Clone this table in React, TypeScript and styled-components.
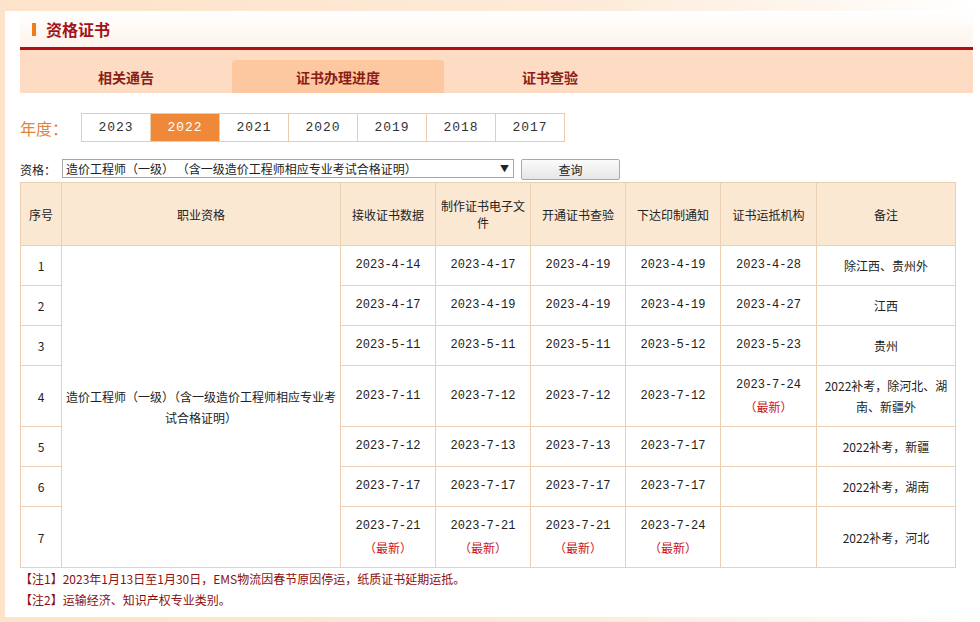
import React from "react";
import styled, { createGlobalStyle } from "styled-components";

const Global = createGlobalStyle`
  html, body { margin: 0; padding: 0; }
  body {
    width: 980px;
    height: 622px;
    overflow: hidden;
    background: #fdebd9;
    font-family: "Noto Sans CJK SC", "Noto Sans", sans-serif;
  }
`;

const Outer = styled.div`
  width: 980px;
  height: 622px;
  background: linear-gradient(to right, #fde3c9 0%, #fdebd9 60%, #ffffff 100%);
  padding: 11px 0 5px 5px;
  box-sizing: border-box;
`;

const Panel = styled.div`
  background: #fff;
  height: 606px;
  padding: 0 7px 0 15px;
  box-sizing: border-box;
  display: flex;
  flex-direction: column;
`;

const TitleBar = styled.div`
  height: 36px;
  background: linear-gradient(#ffffff, #fdf3ec);
  border-bottom: 3px solid #b10f0f;
  display: flex;
  align-items: center;
  padding-left: 12px;
  gap: 10px;
`;

const TitleMark = styled.span`
  width: 4px;
  height: 13px;
  background: #ef7d12;
`;

const Title = styled.span`
  font-size: 16px;
  font-weight: 700;
  color: #a3141a;
`;

const TabBar = styled.div`
  height: 43px;
  background: #fddcc3;
  display: flex;
  align-items: flex-end;
`;

const Tab = styled.div<{ $active?: boolean }>`
  width: 212px;
  height: 33px;
  display: flex;
  align-items: center;
  justify-content: center;
  font-size: 14px;
  font-weight: 700;
  color: #8a1e16;
  background: ${(p) => (p.$active ? "#fdc8a0" : "transparent")};
  border-radius: 4px 4px 0 0;
`;

const YearRow = styled.div`
  display: flex;
  align-items: center;
  margin-top: 20px;
  height: 29px;
`;

const YearLabel = styled.span`
  width: 61px;
  font-size: 16px;
  color: #e2843c;
`;

const YearBtn = styled.div<{ $active?: boolean }>`
  width: 68px;
  height: 27px;
  border: 1px solid #ebcbad;
  margin-left: -1px;
  &:first-of-type { margin-left: 0; }
  display: flex;
  align-items: center;
  justify-content: center;
  font-family: "Liberation Mono", monospace;
  font-size: 13px;
  letter-spacing: 1px;
  color: ${(p) => (p.$active ? "#fff" : "#333")};
  background: ${(p) => (p.$active ? "#f0883a" : "#fff")};
`;

const QueryRow = styled.div`
  display: flex;
  align-items: center;
  margin-top: 17px;
  height: 21px;
`;

const QueryLabel = styled.span`
  width: 42px;
  font-size: 12px;
  color: #222;
`;

const SelectBox = styled.div`
  width: 443px;
  height: 17px;
  border: 1px solid #a5a5a5;
  display: flex;
  align-items: center;
  justify-content: space-between;
  padding: 0 4px 0 3px;
  box-sizing: content-box;
  margin-top: -3px;
  font-size: 12px;
  color: #222;
  background: #fff;
`;

const Arrow = styled.span`
  font-size: 9px;
  color: #222;
`;

const QueryBtn = styled.div`
  width: 97px;
  height: 19px;
  margin-left: 7px;
  border: 1px solid #a9a9a9;
  border-radius: 2px;
  background: linear-gradient(#fbfbfb, #e6e6e6);
  display: flex;
  align-items: center;
  justify-content: center;
  font-size: 12px;
  color: #222;
`;

const Table = styled.table`
  margin-top: 2px;
  width: 935px;
  border-collapse: collapse;
  table-layout: fixed;
  font-size: 12px;
  color: #222;
`;

const Th = styled.th`
  height: 62px;
  background: #fbe8d3;
  border: 1px solid #ebd0b4;
  font-weight: 400;
  font-size: 12px;
  line-height: 17px;
  color: #222;
  padding: 0 4px;
`;

const Td = styled.td<{ $tall?: boolean }>`
  height: ${(p) => (p.$tall ? 60 : 39)}px;
  border: 1px solid #ebd0b4;
  text-align: center;
  padding: 0 2px;
  line-height: 21px;
`;

const DateText = styled.span`
  font-family: "Liberation Mono", monospace;
  font-size: 12px;
  display: block;
`;

const Latest = styled.span`
  display: block;
  color: #c8141a;
  font-size: 12px;
`;

const NameCell = styled.td`
  border: 1px solid #ebd0b4;
  text-align: center;
  padding: 0;
  line-height: 21px;
  font-size: 12px;
`;

const Notes = styled.div`
  padding-top: 0px;
  font-size: 12px;
  line-height: 21px;
  color: #8b0f0f;
`;

const years = ["2023", "2022", "2021", "2020", "2019", "2018", "2017"];

type Row = {
  no: string;
  d: (string | null)[];
  latest: boolean[];
  note: React.ReactNode;
  tall?: boolean;
};

const rows: Row[] = [
  { no: "1", d: ["2023-4-14", "2023-4-17", "2023-4-19", "2023-4-19", "2023-4-28"], latest: [], note: "除江西、贵州外" },
  { no: "2", d: ["2023-4-17", "2023-4-19", "2023-4-19", "2023-4-19", "2023-4-27"], latest: [], note: "江西" },
  { no: "3", d: ["2023-5-11", "2023-5-11", "2023-5-11", "2023-5-12", "2023-5-23"], latest: [], note: "贵州" },
  {
    no: "4",
    d: ["2023-7-11", "2023-7-12", "2023-7-12", "2023-7-12", "2023-7-24"],
    latest: [false, false, false, false, true],
    note: (
      <>
        2022补考，除河北、湖
        <br />
        南、新疆外
      </>
    ),
    tall: true,
  },
  { no: "5", d: ["2023-7-12", "2023-7-13", "2023-7-13", "2023-7-17", null], latest: [], note: "2022补考，新疆" },
  { no: "6", d: ["2023-7-17", "2023-7-17", "2023-7-17", "2023-7-17", null], latest: [], note: "2022补考，湖南" },
  {
    no: "7",
    d: ["2023-7-21", "2023-7-21", "2023-7-21", "2023-7-24", null],
    latest: [true, true, true, true, false],
    note: "2022补考，河北",
    tall: true,
  },
];

const headers = ["接收证书数据", "制作证书电子文件", "开通证书查验", "下达印制通知", "证书运抵机构"];
const widths = [41, 279, 95, 95, 95, 95, 96, 139];

export default function App() {
  return (
    <>
      <Global />
      <Outer>
        <Panel>
          <TitleBar>
            <TitleMark />
            <Title>资格证书</Title>
          </TitleBar>
          <TabBar>
            <Tab>相关通告</Tab>
            <Tab $active>证书办理进度</Tab>
            <Tab>证书查验</Tab>
          </TabBar>
          <YearRow>
            <YearLabel>年度：</YearLabel>
            {years.map((y) => (
              <YearBtn key={y} $active={y === "2022"}>
                {y}
              </YearBtn>
            ))}
          </YearRow>
          <QueryRow>
            <QueryLabel>资格：</QueryLabel>
            <SelectBox>
              <span>造价工程师（一级） （含一级造价工程师相应专业考试合格证明）</span>
              <Arrow>▼</Arrow>
            </SelectBox>
            <QueryBtn>查询</QueryBtn>
          </QueryRow>
          <Table>
            <colgroup>
              {widths.map((w, i) => (
                <col key={i} style={{ width: w }} />
              ))}
            </colgroup>
            <thead>
              <tr>
                <Th>序号</Th>
                <Th>职业资格</Th>
                {headers.map((h) => (
                  <Th key={h}>{h}</Th>
                ))}
                <Th>备注</Th>
              </tr>
            </thead>
            <tbody>
              {rows.map((r, i) => (
                <tr key={r.no}>
                  <Td $tall={r.tall}>{r.no}</Td>
                  {i === 0 && (
                    <NameCell rowSpan={7}>
                      造价工程师（一级）（含一级造价工程师相应专业考
                      <br />
                      试合格证明）
                    </NameCell>
                  )}
                  {r.d.map((d, j) => (
                    <Td key={j} $tall={r.tall}>
                      {d && <DateText>{d}</DateText>}
                      {r.latest[j] && <Latest>（最新）</Latest>}
                    </Td>
                  ))}
                  <Td $tall={r.tall}>{r.note}</Td>
                </tr>
              ))}
            </tbody>
          </Table>
          <Notes>
            <div>【注1】2023年1月13日至1月30日，EMS物流因春节原因停运，纸质证书延期运抵。</div>
            <div>【注2】运输经济、知识产权专业类别。</div>
          </Notes>
        </Panel>
      </Outer>
    </>
  );
}
